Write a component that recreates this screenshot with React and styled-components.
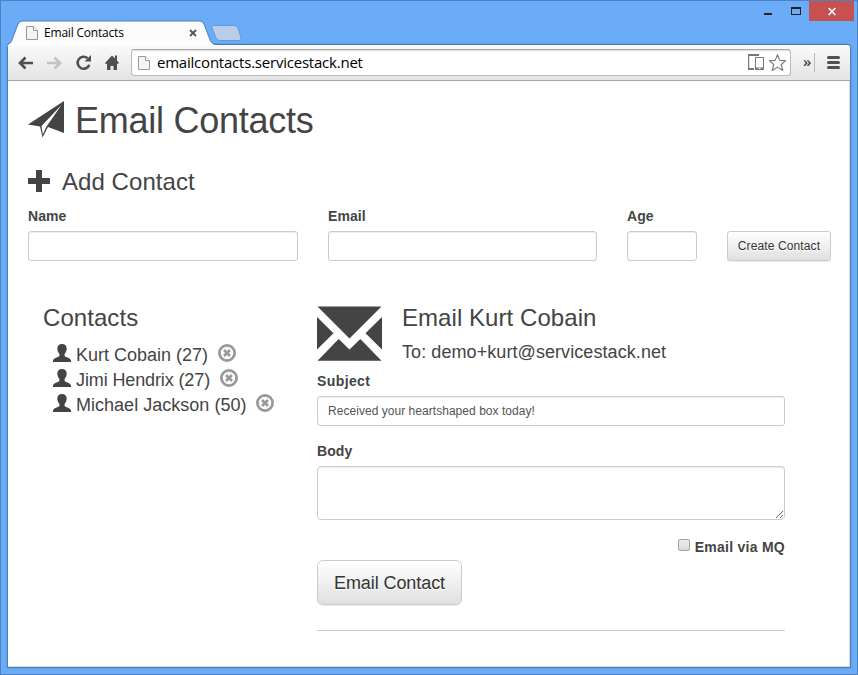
import React from 'react';
import styled, { createGlobalStyle } from 'styled-components';

const GlobalStyle = createGlobalStyle`
  * { box-sizing: border-box; }
  body { margin: 0; overflow: hidden; }
`;

const uiFont = '"Open Sans", "Noto Sans", sans-serif';
const pageFont = '"Liberation Sans", Arial, sans-serif';

/* ---------- browser window ---------- */

const Window = styled.div`
  width: 858px;
  height: 675px;
  display: flex;
  flex-direction: column;
  padding: 0 6px 6px;
  border: 1px solid #4b83c1;
  background: #6aacf7;
`;

const TitleBar = styled.header`
  height: 43px;
  flex: none;
  display: flex;
  align-items: flex-start;
`;

const Tab = styled.div`
  position: relative;
  z-index: 1;
  width: 210px;
  height: 26px;
  margin-top: 19px;
  padding: 0 20px 1px 19px;
  display: flex;
  align-items: center;
  gap: 6px;
`;

const TabShape = styled.svg`
  position: absolute;
  left: 0;
  top: 0;
`;

const TabTitle = styled.span`
  position: relative;
  flex: 1;
  font: 12px/16px ${uiFont};
  letter-spacing: -0.2px;
  color: #000;
  white-space: nowrap;
`;

const Glyph = styled.svg`
  position: relative;
  display: block;
  flex: none;
  overflow: visible;
`;

const NewTab = styled(Glyph)`
  margin: 24px 0 0 -6px;
`;

const WindowControls = styled.div`
  display: flex;
  gap: 3px;
  margin-left: auto;
  margin-right: -3px;
`;

const Control = styled.button`
  width: ${p => p.$w}px;
  height: 20px;
  padding: 0;
  border: 0;
  display: grid;
  place-items: center;
  background: ${p => (p.$close ? '#c75050' : 'transparent')};
`;

const Client = styled.div`
  flex: 1;
  display: flex;
  flex-direction: column;
  border: 1px solid #4d80b9;
  border-top-color: #4779b3;
  border-radius: 4px 4px 0 0;
  background: #fff;
  box-shadow: 0 0 2px #4a86cb;
  min-height: 0;
`;

const Toolbar = styled.nav`
  height: 36px;
  flex: none;
  display: flex;
  align-items: center;
  padding: 0 10px;
  border-bottom: 1px solid #a6a6a6;
  border-radius: 4px 4px 0 0;
  background: linear-gradient(#fafafa, #e4e4e4);
`;

const NavButtons = styled.div`
  display: flex;
  align-items: center;
  width: 113px;
`;

const NavButton = styled.button`
  width: 29px;
  height: 24px;
  padding: 0;
  border: 0;
  background: none;
  display: flex;
  align-items: center;
`;

const Omnibox = styled.div`
  width: 660px;
  height: 27px;
  display: flex;
  align-items: center;
  padding: 0 4px 0 6px;
  border: 1px solid #bcbcbc;
  border-top-color: #a9a9a9;
  border-radius: 3px;
  background: #fff;
  box-shadow: inset 0 1px 1px #ddd;
`;

const Url = styled.span`
  flex: 1;
  margin-left: 7px;
  padding-bottom: 1px;
  font: 15px/20px ${uiFont};
  letter-spacing: -0.22px;
  color: #000;
`;

const Overflow = styled.span`
  margin-left: 12px;
  width: 11px;
  height: 26px;
  font: 600 15px/23px ${uiFont};
  color: #444;
`;

const Separator = styled.i`
  width: 1px;
  height: 19px;
  margin-right: 12px;
  background: #b9b9b9;
`;

/* ---------- page ---------- */

const Page = styled.main`
  flex: 1;
  padding: 20px 20px 0;
  border: solid #dcdcdc;
  border-width: 0 1px 1px 0;
  background: #fff;
  color: #444;
  font-family: ${pageFont};
`;

const Title = styled.h1`
  display: flex;
  height: 40px;
  margin: 0;
  font-weight: 400;
  font-size: 36px;
  line-height: 40px;
  letter-spacing: -0.25px;
  white-space: nowrap;
`;

const Heading = styled.h2`
  display: flex;
  height: 40px;
  margin: ${p => p.$mt || 0}px 0 0;
  font-weight: 400;
  font-size: 24px;
  line-height: 40px;
  letter-spacing: 0.06px;
  white-space: nowrap;
`;

const AddForm = styled.form`
  display: grid;
  grid-template-columns: 270px 269px 70px 104px;
  column-gap: 30px;
  align-items: end;
  margin-top: 4px;
`;

const Field = styled.label`
  display: block;
  margin-bottom: ${p => p.$mb || 0}px;
`;

const Label = styled.span`
  display: block;
  height: 25px;
  font-weight: 700;
  font-size: 14px;
  line-height: 20px;
  letter-spacing: ${p => p.$track || '0.08px'};
`;

const Input = styled.input`
  display: block;
  width: 100%;
  height: 30px;
  padding: 0 10px;
  border: 1px solid #ccc;
  border-radius: 3px;
  outline: 0;
  background: #fff;
  box-shadow: inset 0 1px 1px rgba(0, 0, 0, 0.075);
  font: 12px ${pageFont};
  letter-spacing: 0.04px;
  color: #555;
`;

const TextArea = styled(Input)`
  height: 54px;
  padding: 5px 10px;
  border-radius: 4px;
  resize: vertical;
`;

const Button = styled.button`
  height: ${p => (p.$large ? 45 : 30)}px;
  width: ${p => (p.$large ? '145px' : '100%')};
  padding: ${p => (p.$large ? '1px 0 0' : 0)};
  border: 1px solid #ccc;
  border-radius: ${p => (p.$large ? 6 : 3)}px;
  background: linear-gradient(#fff, #e0e0e0);
  box-shadow: inset 0 1px 0 rgba(255, 255, 255, 0.15), 0 1px 1px rgba(0, 0, 0, 0.075);
  font: ${p => (p.$large ? 18 : 12)}px ${pageFont};
  letter-spacing: ${p => (p.$large ? '-0.08px' : '0.12px')};
  color: #333;
  text-shadow: 0 1px 0 #fff;
  white-space: nowrap;
`;

const Columns = styled.div`
  display: grid;
  grid-template-columns: 274px 468px;
  padding-left: 15px;
  margin-top: 37px;
`;

const ContactList = styled.ul`
  list-style: none;
  margin: 5px 0 0 10px;
  padding: 0;
`;

const Contact = styled.li`
  display: flex;
  height: 25px;
  padding-top: 1px;
  font-size: 18px;
  line-height: 23px;
  white-space: nowrap;
`;

const ContactName = styled.span`
  margin: 0 10px 0 5px;
  width: ${p => p.$w}px;
  letter-spacing: ${p => p.$track || '0'};
`;

const MailHeader = styled.div`
  display: flex;
  height: 73px;
  gap: 20px;
`;

const Recipient = styled.div`
  margin-top: 2px;
  font-size: 18px;
  line-height: 25px;
  letter-spacing: 0.075px;
  white-space: nowrap;
`;

const MqOption = styled.label`
  display: flex;
  justify-content: flex-end;
  height: 23px;
  font-weight: 700;
  font-size: 14px;
  line-height: 20px;
  letter-spacing: 0.26px;
`;

const Checkbox = styled.input`
  appearance: none;
  width: 12px;
  height: 12px;
  margin: 2px 5px 0 0;
  border: 1px solid #a3a3a3;
  border-radius: 2px;
  background: linear-gradient(#ededed, #dcdcdc);
`;

const Rule = styled.hr`
  margin: 25px 0 0;
  border: 0;
  border-top: 1px solid #ccc;
`;

/* ---------- icons ---------- */

const DocumentIcon = () => (
  <Glyph width="12" height="15" viewBox="0 0 12 15">
    <path d="M.5 1.5h7l4 4v9H.5z" fill="#f4f4f4" stroke="#999" />
    <path d="M7.5 1.5v4h4" fill="#fff" stroke="#999" />
  </Glyph>
);

const PersonIcon = () => (
  <Glyph width="18" height="18" viewBox="0 0 18 18">
    <path fill="#444" d="M9 0c3 0 4.700 1.800 4.700 4.600 0 2.200-.9 4.200-2.100 5.300v2c.5 1.200 6.400 1.900 6.400 4.600V18H0v-1.500c0-2.700 5.900-3.400 6.400-4.600v-2C5.200 8.800 4.300 6.800 4.300 4.600 4.300 1.800 6 0 9 0z" />
  </Glyph>
);

const RemoveIcon = () => (
  <Glyph width="18" height="18" viewBox="0 0 18 18">
    <circle cx="9" cy="9" r="7.600" fill="none" stroke="#999" strokeWidth="2.800" />
    <path d="M6 6l6 6M12 6l-6 6" stroke="#999" strokeWidth="2.700" />
  </Glyph>
);

const contacts = [
  { name: 'Kurt Cobain', age: 27, width: 132, track: '0' },
  { name: 'Jimi Hendrix', age: 27, width: 134, track: '-0.12px' },
  { name: 'Michael Jackson', age: 50, width: 170, track: '0.02px' },
];

export default function App() {
  return (
    <Window>
      <GlobalStyle />
      <TitleBar>
        <Tab>
          <TabShape width="210" height="26" viewBox="0 0 210 26">
            <path
              d="M0 26.500C1 24 3 24.500 4.500 21L11 4Q12.500 1 15.500 1H193Q195.500 1 197 4L203.500 21Q205 24.500 208 24.500V26.500z"
              fill="#fcfcfc"
            />
            <path
              d="M0 25C2 23.500 3 24 4.500 21L11 4Q12.500 1 15.500 1H193Q195.500 1 197 4L203.500 21Q205 24.500 210 24.500"
              fill="none" stroke="#487ebd"
            />
          </TabShape>
          <DocumentIcon />
          <TabTitle>Email Contacts</TabTitle>
          <Glyph width="8" height="8" viewBox="0 0 8 8">
            <path d="M1 1l6 6M7 1L1 7" stroke="#555" strokeWidth="1.800" />
          </Glyph>
        </Tab>
        <NewTab width="32" height="16" viewBox="0 0 32 16">
          <path d="M3 .5h20Q26 .5 27 3l3 10q.8 2.500-2 2.500H9Q6 15.500 5 13L1 3Q0 .5 3 .5z" fill="#b9cee6" stroke="#5f99d9" />
        </NewTab>
        <WindowControls>
          <Control $w={30} aria-label="Minimize">
            <Glyph width="8" height="20" viewBox="0 0 8 20"><path d="M0 12h8v2H0z" fill="#222" /></Glyph>
          </Control>
          <Control $w={20} aria-label="Maximize">
            <Glyph width="10" height="20" viewBox="0 0 10 20"><path d="M0 6h10v8H0zM1 8v5h8V8z" fillRule="evenodd" fill="#222" /></Glyph>
          </Control>
          <Control $w={45} $close aria-label="Close">
            <Glyph width="8" height="7" viewBox="0 0 8 7"><path d="M.700 0l6.600 7M7.300 0L.700 7" stroke="#fff" strokeWidth="1.700" /></Glyph>
          </Control>
        </WindowControls>
      </TitleBar>

      <Client>
        <Toolbar>
          <NavButtons>
            <NavButton aria-label="Back">
              <Glyph width="15" height="14" viewBox="0 0 15 14"><path d="M7.500 1.500L2 7l5.500 5.500M2.500 7H15" fill="none" stroke="#505050" strokeWidth="2.700" /></Glyph>
            </NavButton>
            <NavButton aria-label="Forward">
              <Glyph width="15" height="14" viewBox="-1 0 15 14"><path d="M7.500 1.500L13 7l-5.500 5.500M12.500 7H0" fill="none" stroke="#c3c3c3" strokeWidth="2.700" /></Glyph>
            </NavButton>
            <NavButton aria-label="Reload">
              <Glyph width="15" height="15" viewBox="-1 0 15 15">
                <path d="M13.300 9.700A6 6 0 1 1 11.600 3.200" fill="none" stroke="#505050" strokeWidth="2.600" />
                <path d="M15 0v6.500H8.500z" fill="#505050" />
              </Glyph>
            </NavButton>
            <NavButton aria-label="Home">
              <Glyph width="15" height="15" viewBox="-2 0 15 15"><path d="M7 .5l3 3V.5h2v5l2 2.500-1 .8H12V15H8.500v-4h-3v4H2V8.800H0V8z" fill="#505050" /></Glyph>
            </NavButton>
          </NavButtons>
          <Omnibox>
            <DocumentIcon />
            <Url>emailcontacts.servicestack.net</Url>
            <Glyph width="17" height="17" viewBox="0 0 17 17">
              <path d="M10 1H.6v14H6" fill="none" stroke="#777" strokeWidth="1.200" />
              <path d="M0 0h11v2H0zM0 14h6v2H0z" fill="#777" />
              <path d="M7.500 3.500h8v12h-8z" fill="#fff" stroke="#777" />
              <path d="M7.500 13.500h8V16h-8z" fill="#777" /><path d="M10.500 14h2v1h-2z" fill="#fff" />
            </Glyph>
            <Glyph width="21" height="18" viewBox="-3 0 21 18">
              <path d="M9.500 .8l2.300 5.600 6 .3-4.600 3.800 1.600 6-5.300-3.400-5.300 3.400 1.600-6L1.200 6.700l6-.3z" fill="#fff" stroke="#777" strokeWidth="1.100" strokeLinejoin="round" />
            </Glyph>
          </Omnibox>
          <Overflow>»</Overflow>
          <Separator />
          <Glyph width="13" height="13" viewBox="0 0 13 13"><path d="M1.500 1.500h10M1.500 6.500h10M1.500 11.500h10" stroke="#505050" strokeWidth="3" strokeLinecap="round" /></Glyph>
        </Toolbar>

        <Page>
          <Title>
            <Glyph width="47" height="40" viewBox="0 1 47 40">
              <path d="M0 24.500L36 1v32l-16-6-5.500 10.500-2.500-11z" fill="#444" />
              <path d="M33.500 5L13.500 26l1.300 8.500 3.400-7.500z" fill="#fff" />
            </Glyph>
            Email Contacts
          </Title>

          <Heading $mt={21}>
            <Glyph width="34" height="38" viewBox="0 -8 34 38"><path d="M8 0h6v8h8v6h-8v8H8v-8H0V8h8z" fill="#444" /></Glyph>
            Add Contact
          </Heading>
          <AddForm>
            <Field><Label>Name</Label><Input /></Field>
            <Field><Label>Email</Label><Input /></Field>
            <Field><Label>Age</Label><Input /></Field>
            <Button type="button">Create Contact</Button>
          </AddForm>

          <Columns>
            <section>
              <Heading>Contacts</Heading>
              <ContactList>
                {contacts.map(c => (
                  <Contact key={c.name}>
                    <PersonIcon />
                    <ContactName $w={c.width} $track={c.track}>{c.name} ({c.age})</ContactName>
                    <RemoveIcon />
                  </Contact>
                ))}
              </ContactList>
            </section>

            <section>
              <MailHeader>
                <Glyph width="65" height="63" viewBox="0 0 65 63">
                  <path d="M.5 8.500h64L32.500 40.500zM0 19l16.500 16.300L0 51.500zM65 19v32.500L48.500 35.300zM.5 62.700L21.700 41l10.800 10.500L43.300 41l21.200 21.700z" fill="#444" />
                </Glyph>
                <div>
                  <Heading>Email Kurt Cobain</Heading>
                  <Recipient>To: demo+kurt@servicestack.net</Recipient>
                </div>
              </MailHeader>
              <Field $mb={15}><Label $track="0.4px">Subject</Label><Input defaultValue="Received your heartshaped box today!" /></Field>
              <Field $mb={17}><Label>Body</Label><TextArea as="textarea" /></Field>
              <MqOption><Checkbox type="checkbox" />Email via MQ</MqOption>
              <Button type="button" $large>Email Contact</Button>
              <Rule />
            </section>
          </Columns>
        </Page>
      </Client>
    </Window>
  );
}
